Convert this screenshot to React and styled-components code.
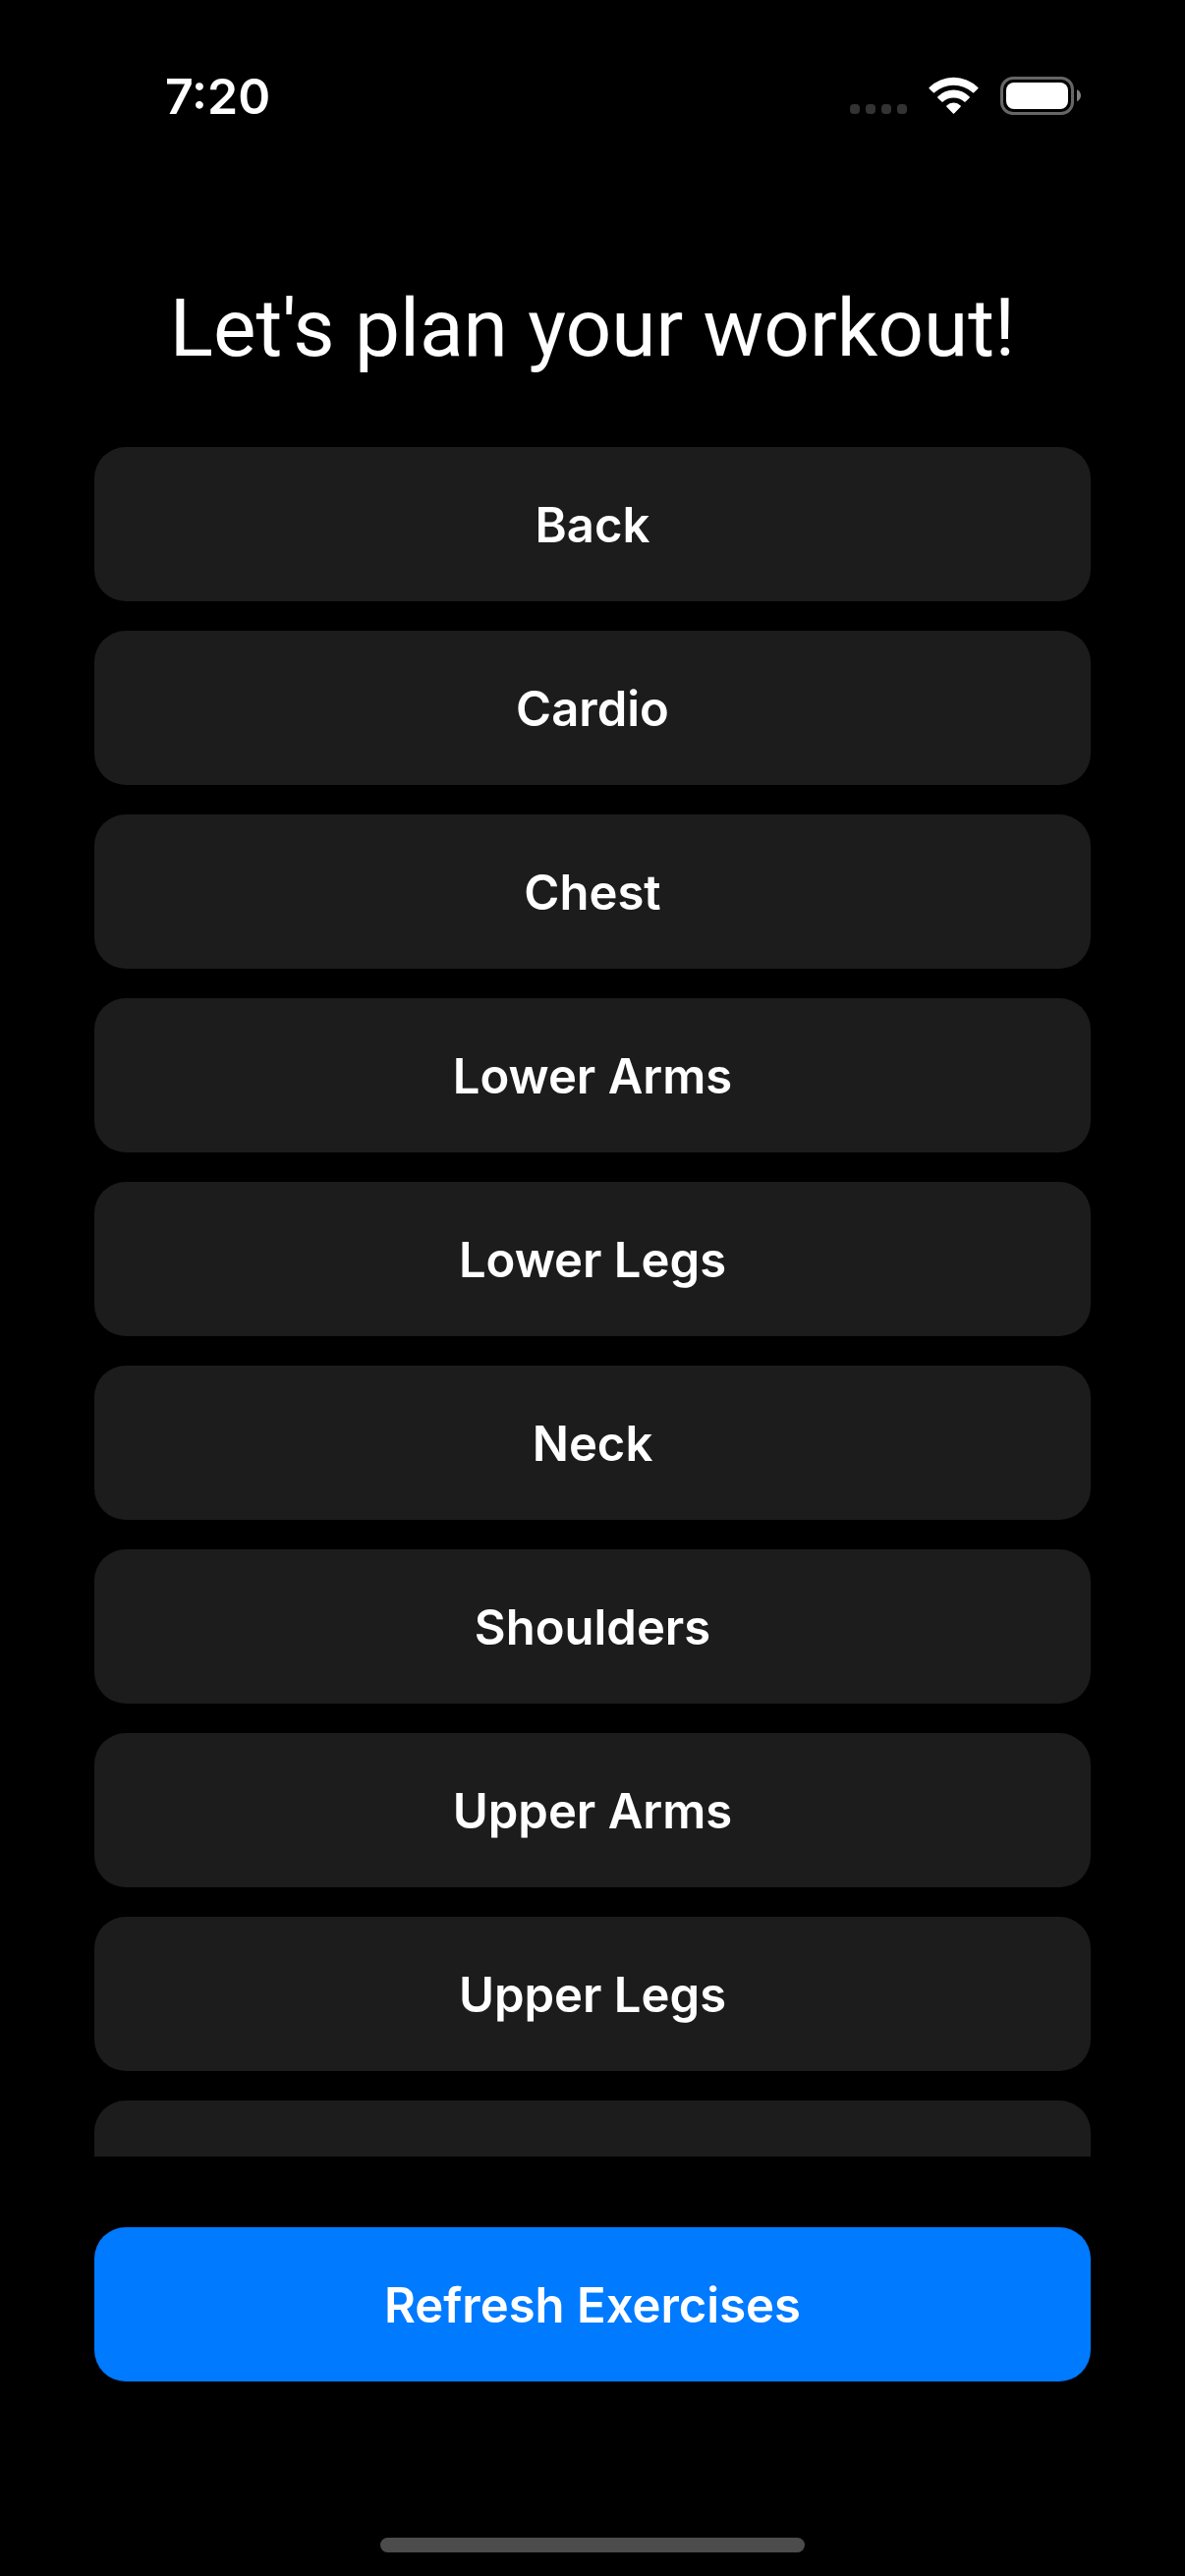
import React from "react";
import styled, { createGlobalStyle } from "styled-components";

const GlobalStyle = createGlobalStyle`
  *, *::before, *::after { box-sizing: border-box; }
  body {
    margin: 0;
    background: #000;
    color: #fff;
    font-family: Inter, "Liberation Sans", sans-serif;
  }
`;

const Screen = styled.div`
  display: flex;
  flex-direction: column;
  height: 100vh;
  padding-bottom: 24px;
`;

const StatusBar = styled.header`
  display: flex;
  align-items: center;
  justify-content: space-between;
  padding: 67px 106px 0 168px;
`;

const Clock = styled.time`
  padding-top: 1px;
  font-size: 50px;
  line-height: 60px;
  font-weight: 600;
`;

const StatusIcons = styled.div`
  display: flex;
  align-items: center;
  gap: 22px;

  svg { display: block; }
`;

const Content = styled.main`
  display: flex;
  flex-direction: column;
  flex: 1 1 0;
  min-height: 0;
  padding: 156px 96px 159px;
`;

const Title = styled.h1`
  margin: 0;
  font-family: Roboto, "Liberation Sans", sans-serif;
  font-size: 82px;
  line-height: 100px;
  font-weight: 400;
  text-align: center;
  white-space: nowrap;
`;

const BodyPartList = styled.ul`
  display: flex;
  flex-direction: column;
  gap: 30px;
  flex: 1 1 0;
  min-height: 0;
  margin: 71px 0 72px;
  padding: 0;
  list-style: none;
  overflow-y: auto;
  scrollbar-width: none;
`;

const Button = styled.button`
  display: block;
  flex: none;
  width: 100%;
  height: 157px;
  padding: 2px 0 0;
  border: 0;
  border-radius: 32px;
  background: ${({ $primary }) => ($primary ? "#007aff" : "#1c1c1c")};
  color: #fff;
  font: 600 49px/60px Inter, "Liberation Sans", sans-serif;
  cursor: pointer;
`;

const HomeIndicator = styled.div`
  flex: none;
  align-self: center;
  width: 432px;
  max-width: 60%;
  height: 15px;
  border-radius: 8px;
  background: #4c4c4c;
`;

const bodyParts = [
  "Back",
  "Cardio",
  "Chest",
  "Lower Arms",
  "Lower Legs",
  "Neck",
  "Shoulders",
  "Upper Arms",
  "Upper Legs",
];

function SignalIcon() {
  return (
    <svg width="58" height="39" viewBox="0 0 58 39" fill="#333" aria-hidden="true">
      {[0, 16, 32, 48].map((x) => (
        <rect key={x} x={x} y="28" width="10" height="10" rx="4" />
      ))}
    </svg>
  );
}

function WifiIcon() {
  return (
    <svg width="51" height="39" viewBox="0 0 51 39" fill="#fff" aria-hidden="true">
      <path d="M.7 10.9A35.5 35.5 0 0 1 50.3 10.9Q51 11.5 50.3 12.2L46.2 16.3Q45.6 16.9 45 16.3A29.2 29.2 0 0 0 6 16.3Q5.4 16.9 4.8 16.3L.7 12.2Q0 11.5 .7 10.9Z" />
      <path d="M9.5 20.3A22.3 22.3 0 0 1 41.5 20.3Q42.3 21 41.6 21.7L37.6 25.6Q37 26.2 36.3 25.6A16.4 16.4 0 0 0 14.7 25.6Q14 26.2 13.4 25.6L9.4 21.7Q8.7 21 9.5 20.3Z" />
      <path d="M18.4 29.5A10 10 0 0 1 32.6 29.5Q33.3 30.1 32.6 30.8L26.1 37.4Q25.5 38 24.9 37.4L18.4 30.8Q17.7 30.1 18.4 29.5Z" />
    </svg>
  );
}

function BatteryIcon() {
  return (
    <svg width="82" height="39" viewBox="0 0 82 39" fill="none" aria-hidden="true">
      <rect x="1.5" y="1.5" width="72" height="36" rx="11.5" stroke="#666" strokeWidth="3" />
      <rect x="6" y="6" width="63" height="27" rx="8" fill="#fff" />
      <path d="M78 13.3C80.5 14.3 82 16.7 82 19.3S80.5 24.3 78 25.3Z" fill="#808080" />
    </svg>
  );
}

export default function App() {
  return (
    <Screen>
      <GlobalStyle />
      <StatusBar>
        <Clock>7:20</Clock>
        <StatusIcons>
          <SignalIcon />
          <WifiIcon />
          <BatteryIcon />
        </StatusIcons>
      </StatusBar>
      <Content>
        <Title>Let's plan your workout!</Title>
        <BodyPartList>
          {bodyParts.map((part) => (
            <li key={part}>
              <Button type="button">{part}</Button>
            </li>
          ))}
          <li>
            <Button type="button" aria-label="Waist" />
          </li>
        </BodyPartList>
        <Button type="button" $primary>
          Refresh Exercises
        </Button>
      </Content>
      <HomeIndicator />
    </Screen>
  );
}
